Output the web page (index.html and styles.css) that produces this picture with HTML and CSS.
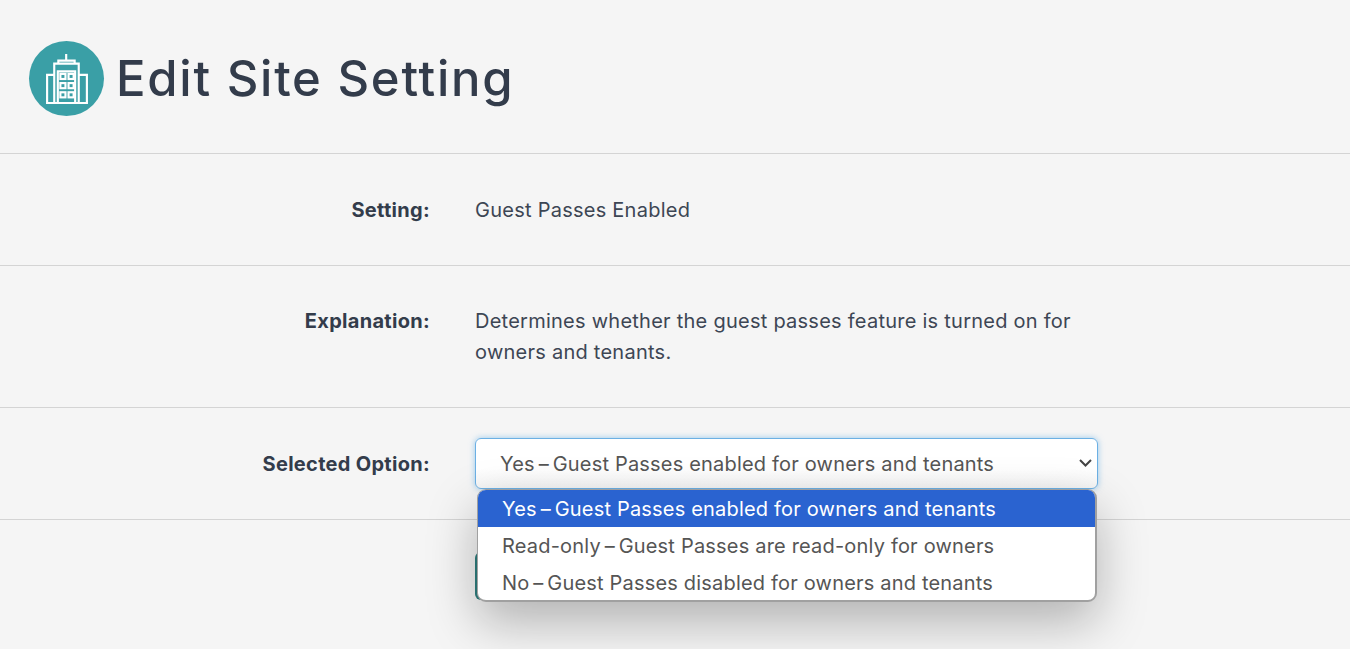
FILE: index.html
```html
<!DOCTYPE html>
<html lang="en">
<head>
    <meta charset="UTF-8">
    <meta name="viewport" content="width=device-width, initial-scale=1.0">
    <title>Edit Site Setting</title>
    <link rel="stylesheet" href="styles.css">
</head>
<body>
    <header class="page-header">
        <div class="page-icon">
            <svg width="42" height="50" viewBox="0 0 41 49" fill="none" stroke="#fff" stroke-width="2.1">
                <path d="M19.700 0v6.500M12 9.500V6.500h16v3"/>
                <path d="M8 48V9.500h24V48"/>
                <path d="M8 20.500H1v27.500h39V20.500h-8"/>
                <path d="M11.500 48V17h17v31"/>
                <rect x="14" y="19.500" width="5" height="5"/>
                <rect x="22" y="19.500" width="5" height="5"/>
                <rect x="14" y="28.500" width="5" height="5"/>
                <rect x="22" y="28.500" width="5" height="5"/>
                <rect x="14" y="37.500" width="5" height="5"/>
                <rect x="22" y="37.500" width="5" height="5"/>
            </svg>
        </div>
        <h1>Edit Site Setting</h1>
    </header>

    <div class="form-row">
        <div class="form-label">Setting:</div>
        <div class="form-value">Guest Passes Enabled</div>
    </div>

    <div class="form-row form-row-text">
        <div class="form-label">Explanation:</div>
        <div class="form-value">Determines whether the guest passes feature is turned on for owners and tenants.</div>
    </div>

    <div class="form-row">
        <div class="form-label">Selected Option:</div>
        <div class="select-wrap">
            <select class="select-box" aria-label="Selected Option">
                <option>Yes&thinsp;–&thinsp;Guest Passes enabled for owners and tenants</option>
            </select>
            <svg class="select-arrow" width="13" height="8" viewBox="0 0 13 8" fill="none" stroke="#444" stroke-width="2">
                <path d="M1 1l5.500 5.500L12 1"/>
            </svg>
            <ul class="select-menu">
                <li class="selected">Yes&thinsp;–&thinsp;Guest Passes enabled for owners and tenants</li>
                <li>Read-only&thinsp;–&thinsp;Guest Passes are read-only for owners</li>
                <li>No&thinsp;–&thinsp;Guest Passes disabled for owners and tenants</li>
            </ul>
        </div>
    </div>

    <div class="form-actions">
        <button class="save-btn" aria-label="Save"></button>
    </div>
</body>
</html>
```

FILE: styles.css
```css
html, body {
    margin: 0;
    height: 100%;
    overflow: hidden;
}
body {
    background-color: #f5f5f5;
    color: #333c4b;
    font-family: 'Inter', 'Noto Sans', sans-serif;
    font-size: 20px;
}
.page-header {
    display: flex;
    align-items: center;
    gap: 12px;
    height: 153px;
    padding: 4px 0 0 29px;
    box-sizing: border-box;
}
.page-icon {
    width: 75px;
    height: 75px;
    border-radius: 50%;
    background-color: #3a9fa6;
    display: flex;
    align-items: center;
    justify-content: center;
}
h1 {
    margin: 0;
    font-size: 49px;
    font-weight: 500;
    letter-spacing: 1.75px;
}
.form-row {
    display: grid;
    grid-template-columns: 430px 623px;
    column-gap: 45px;
    padding: 30px 0;
    border-top: 1px solid #d4d4d4;
}
.form-label {
    padding: 11px 0 9px;
    line-height: 31px;
    text-align: right;
    font-weight: 700;
    letter-spacing: 0.3px;
}
.form-value {
    padding: 11px 0 9px;
    line-height: 31px;
    color: #3d4654;
    letter-spacing: 0.25px;
}
.form-row-text {
    padding-bottom: 29px;
}
.form-row-text .form-label,
.form-row-text .form-value {
    padding: 10px 0;
}
.select-wrap {
    position: relative;
}
.select-box {
    display: block;
    width: 100%;
    height: 51px;
    padding: 0 40px 0 24px;
    appearance: none;
    border: 1px solid #6cb0e4;
    border-radius: 6px;
    background: linear-gradient(#fff 60%, #f5f5f5);
    box-shadow: 0 0 6px rgba(90, 170, 230, 0.6);
    color: #555;
    font-family: inherit;
    font-size: 20px;
    letter-spacing: 0.19px;
}
.select-arrow {
    position: absolute;
    top: 21px;
    right: 6px;
}
.select-menu {
    position: absolute;
    top: 51px;
    left: 2px;
    right: 1px;
    margin: 0;
    padding: 0;
    list-style: none;
    overflow: hidden;
    background-color: #fff;
    border: 1px solid #a0a0a0;
    border-right-width: 2px;
    border-bottom-width: 2px;
    border-radius: 9px;
    box-shadow: 0 20px 50px rgba(0, 0, 0, 0.28);
    color: #555;
    letter-spacing: 0.19px;
}
.select-menu li {
    height: 37px;
    line-height: 38px;
    padding-left: 24px;
}
.select-menu li:last-child {
    height: 36px;
}
.select-menu .selected {
    background-color: #2a63d0;
    color: #fff;
}
.form-actions {
    display: grid;
    grid-template-columns: 430px 623px;
    column-gap: 45px;
    padding-top: 32px;
    border-top: 1px solid #d4d4d4;
}
.save-btn {
    grid-column: 2;
    width: 160px;
    height: 48px;
    border: none;
    border-radius: 6px;
    background-color: #2f7f7f;
}
```
